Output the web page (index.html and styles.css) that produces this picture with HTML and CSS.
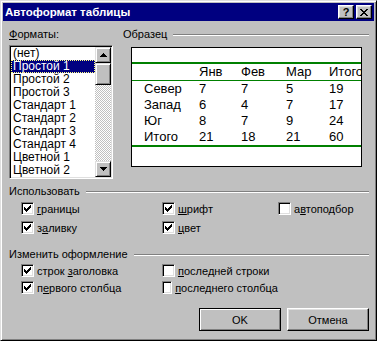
FILE: index.html
```html
<!DOCTYPE html>
<html lang="ru">
<head>
    <meta charset="UTF-8">
    <title>Автоформат таблицы</title>
    <link rel="stylesheet" href="styles.css">
</head>
<body>
<div class="window">
    <div class="titlebar">
        <span class="title">Автоформат таблицы</span>
        <button class="cap-btn">?</button>
        <button class="cap-btn">
            <svg width="8" height="7" viewBox="0 0 8 7"><path d="M0 0h2v1H0zM6 0h2v1H6zM1 1h2v1H1zM5 1h2v1H5zM2 2h4v1H2zM3 3h2v1H3zM2 4h4v1H2zM1 5h2v1H1zM5 5h2v1H5zM0 6h2v1H0zM6 6h2v1H6z"/></svg>
        </button>
    </div>

    <div class="content">
        <div class="top">
            <div class="formats">
                <div class="label"><u>Ф</u>орматы:</div>
                <div class="listbox">
                    <ul class="items">
                        <li>(нет)</li>
                        <li class="selected">Простой 1</li>
                        <li>Простой 2</li>
                        <li>Простой 3</li>
                        <li>Стандарт 1</li>
                        <li>Стандарт 2</li>
                        <li>Стандарт 3</li>
                        <li>Стандарт 4</li>
                        <li>Цветной 1</li>
                        <li>Цветной 2</li>
                    </ul>
                    <div class="scrollbar">
                        <div class="sb-btn">
                            <svg width="7" height="4" viewBox="0 0 7 4"><path d="M3 0h1v1H3zM2 1h3v1H2zM1 2h5v1H1zM0 3h7v1H0z"/></svg>
                        </div>
                        <div class="sb-btn sb-thumb"></div>
                        <div class="sb-track"></div>
                        <div class="sb-btn">
                            <svg width="7" height="4" viewBox="0 0 7 4"><path d="M0 0h7v1H0zM1 1h5v1H1zM2 2h3v1H2zM3 3h1v1H3z"/></svg>
                        </div>
                    </div>
                </div>
            </div>

            <div class="sample">
                <div class="group-head"><span>Образец</span><i class="rule"></i></div>
                <div class="preview">
                    <div class="blank"></div>
                    <div class="thick"></div>
                    <div class="trow"><span></span><span>Янв</span><span>Фев</span><span>Мар</span><span>Итого</span></div>
                    <div class="thin"></div>
                    <div class="trow"><span>Север</span><span>7</span><span>7</span><span>5</span><span>19</span></div>
                    <div class="trow"><span>Запад</span><span>6</span><span>4</span><span>7</span><span>17</span></div>
                    <div class="trow"><span>Юг</span><span>8</span><span>7</span><span>9</span><span>24</span></div>
                    <div class="trow"><span>Итого</span><span>21</span><span>18</span><span>21</span><span>60</span></div>
                    <div class="thick"></div>
                </div>
            </div>
        </div>

        <div class="group">
            <div class="group-head"><span>Использовать</span><i class="rule"></i></div>
            <div class="checks">
                <label class="check"><span class="box on"></span><span><u>г</u>раницы</span></label>
                <label class="check"><span class="box on"></span><span><u>ш</u>рифт</span></label>
                <label class="check"><span class="box"></span><span>а<u>в</u>топодбор</span></label>
                <label class="check"><span class="box on"></span><span>з<u>а</u>ливку</span></label>
                <label class="check"><span class="box on"></span><span><u>ц</u>вет</span></label>
            </div>
        </div>

        <div class="group change">
            <div class="group-head"><span>Изменить оформление</span><i class="rule"></i></div>
            <div class="checks">
                <label class="check"><span class="box on"></span><span>строк <u>з</u>аголовка</span></label>
                <label class="check"><span class="box"></span><span><u>п</u>оследней строки</span></label>
                <span></span>
                <label class="check"><span class="box on"></span><span>п<u>е</u>рвого столбца</span></label>
                <label class="check"><span class="box"></span><span><u>п</u>оследнего столбца</span></label>
            </div>
        </div>

        <div class="buttons">
            <button class="btn default">OK</button>
            <button class="btn">Отмена</button>
        </div>
    </div>
</div>
</body>
</html>
```

FILE: styles.css
```css
body {
    margin: 0;
    background: #c0c0c0;
    font-family: "Liberation Sans", Arial, sans-serif;
    font-size: 11px;
    color: #000;
}
.window {
    width: 377px;
    height: 341px;
    box-sizing: border-box;
    border: 1px solid;
    border-color: #dfdfdf #000 #000 #dfdfdf;
    box-shadow: inset 1px 1px #fff, inset -1px -1px #808080;
    padding: 2px;
    display: flex;
    flex-direction: column;
}
.titlebar {
    height: 18px;
    background: #000080;
    color: #fff;
    display: flex;
    align-items: center;
    padding: 0 2px 0 2px;
}
.title {
    flex: 1;
    font-weight: bold;
    font-size: 11.5px;
}
.cap-btn {
    width: 16px;
    height: 14px;
    margin-left: 2px;
    padding: 0;
    box-sizing: border-box;
    background: #c0c0c0;
    border: 1px solid;
    border-color: #fff #000 #000 #fff;
    box-shadow: inset -1px -1px #808080, inset 1px 1px #dfdfdf;
    display: flex;
    align-items: center;
    justify-content: center;
    font: bold 11px "Liberation Sans", Arial, sans-serif;
    color: #000;
}
.cap-btn svg, .sb-btn svg {
    display: block;
}
.content {
    flex: 1;
    padding: 7px 5px 0 6px;
}
.top {
    display: flex;
    gap: 10px;
}
.formats {
    width: 104px;
}
.label {
    height: 13px;
    line-height: 13px;
}
.listbox {
    margin-top: 4px;
    height: 134px;
    box-sizing: border-box;
    border: 1px solid;
    border-color: #808080 #fff #fff #808080;
    box-shadow: inset 1px 1px #000, inset -1px -1px #dfdfdf;
    padding: 1px;
    background: #fff;
    display: flex;
}
.items {
    list-style: none;
    margin: 0;
    padding: 0;
    flex: 1;
    font-size: 12px;
    line-height: 13px;
}
.items li {
    height: 13px;
    padding-left: 2px;
    white-space: nowrap;
}
.items .selected {
    background: #000080;
    color: #fff;
    outline: 1px dotted #ffff80;
    outline-offset: -1px;
}
.scrollbar {
    width: 16px;
    display: flex;
    flex-direction: column;
}
.sb-btn {
    width: 16px;
    height: 16px;
    box-sizing: border-box;
    background: #c0c0c0;
    border: 1px solid;
    border-color: #dfdfdf #000 #000 #dfdfdf;
    box-shadow: inset 1px 1px #fff, inset -1px -1px #808080;
    display: flex;
    align-items: center;
    justify-content: center;
}
.sb-thumb {
    height: 22px;
}
.sb-track {
    flex: 1;
    background-image: conic-gradient(#fff 25%, #c0c0c0 0 50%, #fff 0 75%, #c0c0c0 0);
    background-size: 2px 2px;
}
.sample {
    flex: 1;
}
.group-head {
    display: flex;
    align-items: center;
    height: 13px;
    line-height: 13px;
    white-space: nowrap;
}
.rule {
    flex: 1;
    border-top: 1px solid #808080;
    border-bottom: 1px solid #fff;
    margin-left: 6px;
}
.preview {
    margin: 6px 0 0 8px;
    width: 231px;
    height: 120px;
    box-sizing: border-box;
    border: 1px solid #000;
    background: #fff;
    overflow: hidden;
    font-size: 13px;
}
.blank {
    height: 14px;
}
.thick {
    height: 2px;
    background: #008000;
}
.thin {
    height: 1px;
    background: #008000;
}
.trow {
    display: grid;
    grid-template-columns: 55px 42px 45px 43px 40px;
    padding-left: 12px;
    height: 16px;
    line-height: 16px;
    white-space: nowrap;
}
.group {
    margin-top: 6px;
}
.group.change {
    margin-top: 11px;
}
.checks {
    display: grid;
    grid-template-columns: 141px 116px auto;
    padding-left: 12px;
    margin-top: 1px;
}
.check {
    display: flex;
    align-items: center;
    gap: 3px;
    height: 19px;
    white-space: nowrap;
}
.change .check {
    height: 17px;
}
.box {
    width: 13px;
    height: 13px;
    box-sizing: border-box;
    border: 1px solid;
    border-color: #808080 #fff #fff #808080;
    box-shadow: inset 1px 1px #000, inset -1px -1px #dfdfdf;
    background: #fff;
}
.box.on {
    background-image: url("data:image/svg+xml,%3Csvg xmlns='http://www.w3.org/2000/svg' width='11' height='11' viewBox='1 1 11 11'%3E%3Cpath d='M9 3h1v1H9zM8 4h2v1H8zM3 5h1v1H3zM7 5h3v1H7zM3 6h2v1H3zM6 6h3v1H6zM3 7h5v1H3zM4 8h3v1H4zM5 9h1v1H5z'/%3E%3C/svg%3E");
    background-repeat: no-repeat;
}
.buttons {
    display: flex;
    justify-content: flex-end;
    gap: 6px;
    margin-top: 12px;
}
.btn {
    width: 82px;
    height: 23px;
    padding: 0;
    box-sizing: border-box;
    background: #c0c0c0;
    border: 1px solid;
    border-color: #fff #000 #000 #fff;
    box-shadow: inset -1px -1px #808080, inset 1px 1px #dfdfdf;
    font: 11px "Liberation Sans", Arial, sans-serif;
    color: #000;
}
.btn.default {
    border-color: #000;
    box-shadow: inset 1px 1px #fff, inset -1px -1px #808080;
}
```
